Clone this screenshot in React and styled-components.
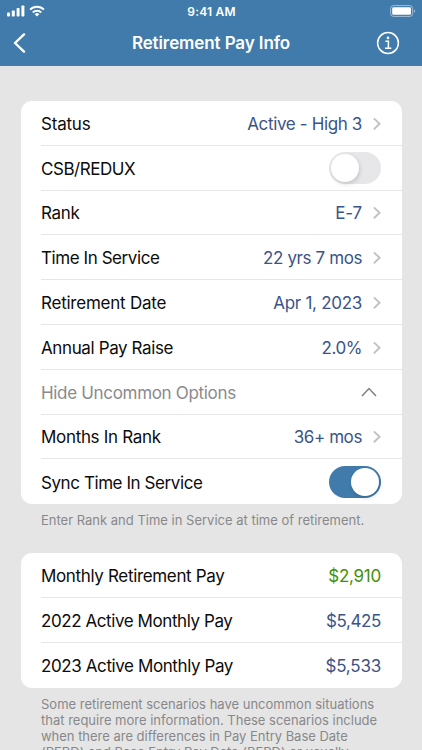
import styled, { createGlobalStyle } from "styled-components";

const GlobalStyle = createGlobalStyle`
  * {
    box-sizing: border-box;
  }
  body {
    margin: 0;
    background: #e5e5e5;
    font-family: Inter, "Liberation Sans", sans-serif;
    overflow: hidden;
  }
`;

const Screen = styled.div`
  display: flex;
  flex-direction: column;
  width: 422px;
  height: 750px;
  overflow: hidden;
  background: #e5e5e5;
`;

const Header = styled.header`
  flex: none;
  height: 66px;
  background: #407bab;
  color: #fff;
`;

const StatusBar = styled.div`
  display: grid;
  grid-template-columns: 1fr auto 1fr;
  align-items: center;
  height: 21px;
  padding: 0 6px 0 7px;
`;

const Signals = styled.div`
  display: flex;
  align-items: center;
  gap: 4px;
`;

const Clock = styled.span`
  padding-top: 1px;
  font-size: 12px;
  font-weight: 600;
  letter-spacing: 0.2px;
`;

const Battery = styled.svg`
  justify-self: end;
`;

const NavBar = styled.nav`
  display: grid;
  grid-template-columns: 1fr auto 1fr;
  align-items: center;
  height: 44px;
  padding: 0 22px 0 13px;
`;

const Title = styled.h1`
  margin: 0 0 0 9px;
  font-size: 17px;
  line-height: 22px;
  font-weight: 600;
  letter-spacing: -0.1px;
  white-space: nowrap;
`;

const IconButton = styled.button`
  display: flex;
  justify-self: ${({ $end }) => ($end ? "end" : "start")};
  padding: 0;
  border: 0;
  background: none;
  color: inherit;
`;

const Content = styled.main`
  display: flex;
  flex-direction: column;
  padding: 35px 20.5px 0 21px;
`;

const Card = styled.section`
  flex: none;
  border-radius: 11px;
  background: #fff;
  overflow: hidden;
`;

const Row = styled.div`
  display: flex;
  align-items: center;
  justify-content: space-between;
  height: 44.8px;
  margin-left: 20px;
  padding: 1px 20.5px 0 0;
  border-bottom: 1px solid #e6e6e6;
  font-size: 17px;
  white-space: nowrap;

  &:last-child {
    border-bottom: 0;
  }
`;

const Label = styled.span`
  padding-top: 1px;
  color: ${({ $muted }) => ($muted ? "#8a8a8d" : "#0c0c0c")};
  letter-spacing: ${({ $spacing }) => $spacing || "-0.2px"};
`;

const Value = styled.span`
  display: flex;
  align-items: center;
  gap: 11px;
  padding-top: 1px;
  color: ${({ $green }) => ($green ? "#458f06" : "#3b5488")};
  letter-spacing: ${({ $spacing }) => $spacing || "-0.2px"};
`;

const Switch = styled.button`
  display: flex;
  align-items: center;
  justify-content: ${({ $on }) => ($on ? "flex-end" : "flex-start")};
  width: 52px;
  height: 32px;
  padding: 2px;
  border: 0;
  border-radius: 16px;
  background: ${({ $on }) => ($on ? "#407bab" : "#e7e7ea")};
`;

const Knob = styled.span`
  width: 28px;
  height: 28px;
  border-radius: 50%;
  background: #fff;
  box-shadow: 1px 2px 4px rgba(0, 0, 0, 0.15);
`;

const CollapseIcon = styled.svg`
  margin-right: 4px;
`;

const Note = styled.p`
  margin: ${({ $margin }) => $margin};
  padding-left: 20px;
  color: #88888b;
  font-size: 13px;
  line-height: 16.2px;
  letter-spacing: 0;
  white-space: nowrap;
`;

const NoteLine = styled.span`
  display: block;
  letter-spacing: ${({ $spacing }) => $spacing || "inherit"};
`;

const Chevron = () => (
  <svg width="8" height="14" viewBox="0 0 8 14" fill="none" stroke="#c2c2c4" strokeWidth="1.9">
    <path d="M0.9 1.4 6.6 6.8 0.9 12.2" />
  </svg>
);

const Toggle = ({ on, label }) => (
  <Switch type="button" role="switch" aria-checked={on} aria-label={label} $on={on}>
    <Knob />
  </Switch>
);

// ls / vs: letter spacing of the label and of the value
const options = [
  { label: "Status", value: "Active - High 3", vs: "-0.36px" },
  { label: "CSB/REDUX", ls: "-0.45px", toggle: true, on: false },
  { label: "Rank", ls: "-0.3px", value: "E-7" },
  { label: "Time In Service", ls: "-0.43px", value: "22 yrs 7 mos", vs: "-0.4px" },
  { label: "Retirement Date", ls: "-0.23px", value: "Apr 1, 2023", vs: "-0.28px" },
  { label: "Annual Pay Raise", ls: "-0.38px", value: "2.0%", vs: "-0.45px" },
  { label: "Hide Uncommon Options", ls: "-0.32px", collapse: true },
  { label: "Months In Rank", ls: "-0.32px", value: "36+ mos", vs: "-0.4px" },
  { label: "Sync Time In Service", ls: "-0.42px", toggle: true, on: true },
];

const results = [
  { label: "Monthly Retirement Pay", ls: "-0.34px", value: "$2,910", vs: "-0.25px", green: true },
  { label: "2022 Active Monthly Pay", ls: "-0.42px", value: "$5,425", vs: "-0.4px" },
  { label: "2023 Active Monthly Pay", ls: "-0.4px", value: "$5,533" },
];

const OptionRow = ({ item }) => (
  <Row>
    <Label $muted={item.collapse} $spacing={item.ls}>{item.label}</Label>
    {item.toggle && <Toggle on={item.on} label={item.label} />}
    {item.collapse && (
      <CollapseIcon width="16" height="10" viewBox="0 0 16 10" fill="none" stroke="#7f7f82" strokeWidth="1.5">
        <path d="M1 9 8 1.6 15 9" />
      </CollapseIcon>
    )}
    {item.value && (
      <Value $spacing={item.vs}>
        {item.value}
        <Chevron />
      </Value>
    )}
  </Row>
);

const App = () => {
  return (
    <>
      <GlobalStyle />
      <Screen>
        <Header>
          <StatusBar>
            <Signals>
              <svg width="18" height="12" viewBox="0 0 18 12" fill="#fff">
                <rect x="0" y="7.5" width="3" height="4" rx="0.8" />
                <rect x="4.8" y="5.5" width="3" height="6" rx="0.8" />
                <rect x="9.6" y="3" width="3" height="8.5" rx="0.8" />
                <rect x="14.4" y="0.4" width="3" height="11.1" rx="0.8" />
              </svg>
              <svg width="16" height="12" viewBox="0 0 16 12" fill="none" stroke="#fff" strokeWidth="2">
                <path d="M1.1 4.6a9.8 9.8 0 0 1 13.8 0" />
                <path d="M3.8 7.5a6 6 0 0 1 8.4 0" />
                <path d="M8 11.5 5.7 9.2a3.3 3.3 0 0 1 4.6 0Z" fill="#fff" stroke="none" />
              </svg>
            </Signals>
            <Clock>9:41 AM</Clock>
            <Battery width="26" height="12" viewBox="0 0 26 12" fill="none">
              <rect x="0.6" y="0.6" width="22" height="10.8" rx="2.8" stroke="#fff" strokeOpacity="0.5" />
              <rect x="2.2" y="2.2" width="18.8" height="7.6" rx="1.3" fill="#fff" />
              <path d="M24 4.2v3.6q1.2-.5 1.2-1.8T24 4.2Z" fill="#fff" fillOpacity="0.5" />
            </Battery>
          </StatusBar>
          <NavBar>
            <IconButton type="button" aria-label="Back">
              <svg width="13" height="20" viewBox="0 0 13 20" fill="none" stroke="#fff" strokeWidth="2.4" strokeLinecap="round" strokeLinejoin="round">
                <path d="M11 1.4 2 10l9 8.6" />
              </svg>
            </IconButton>
            <Title>Retirement Pay Info</Title>
            <IconButton type="button" aria-label="Info" $end>
              <svg width="24" height="24" viewBox="0 0 24 24" fill="none" stroke="#fff" strokeWidth="1.5">
                <circle cx="12" cy="12" r="10.4" />
                <circle cx="12" cy="6.9" r="1.3" fill="#fff" stroke="none" />
                <path d="M9.4 10.2h3v7M9 17.2h6.4" />
              </svg>
            </IconButton>
          </NavBar>
        </Header>
        <Content>
          <Card>
            {options.map((item) => (
              <OptionRow key={item.label} item={item} />
            ))}
          </Card>
          <Note $margin="8px 0 25px">
            <NoteLine>Enter Rank and Time in Service at time of retirement.</NoteLine>
          </Note>
          <Card>
            {results.map((item) => (
              <Row key={item.label}>
                <Label $spacing={item.ls}>{item.label}</Label>
                <Value $green={item.green} $spacing={item.vs}>{item.value}</Value>
              </Row>
            ))}
          </Card>
          <Note $margin="8px 0 0">
            <NoteLine>Some retirement scenarios have uncommon situations</NoteLine>
            <NoteLine>that require more information. These scenarios include</NoteLine>
            <NoteLine $spacing="-0.02px">when there are differences in Pay Entry Base Date</NoteLine>
            <NoteLine $spacing="-0.02px">(PEBD) and Base Entry Pay Date (BEPD) or usually</NoteLine>
          </Note>
        </Content>
      </Screen>
    </>
  );
};

export default App;
